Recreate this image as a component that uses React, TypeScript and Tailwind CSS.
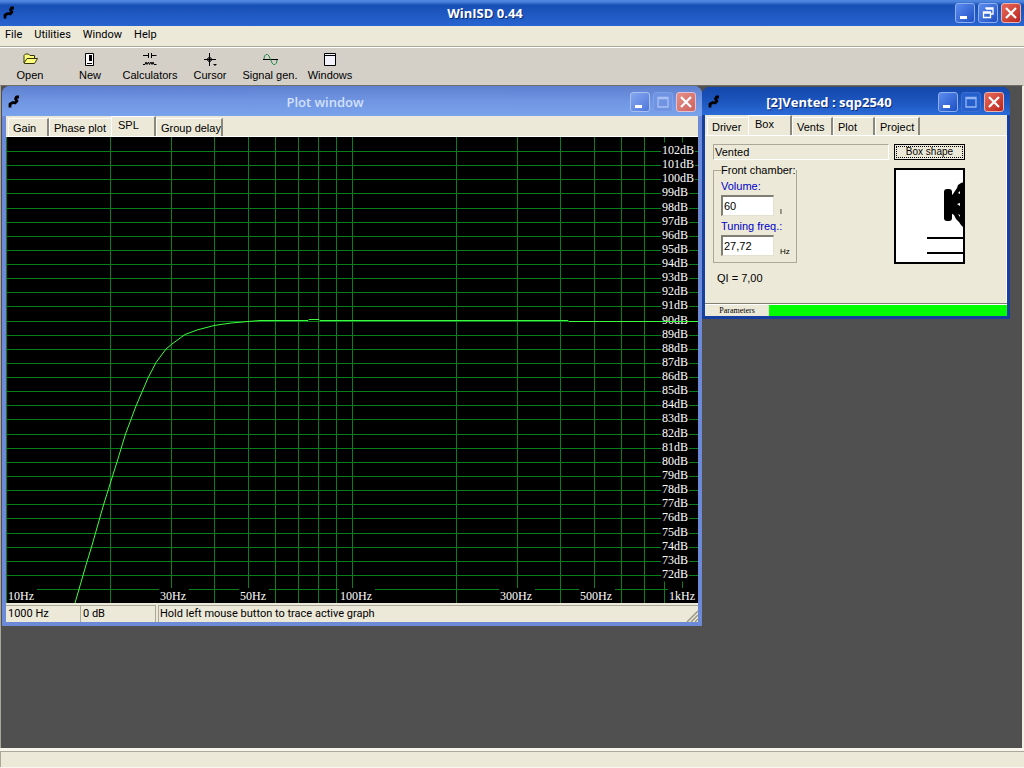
import React from 'react';

const UI_FONT = "font-['Liberation_Sans',sans-serif]";
const SYSTEM_FONT = "font-['Roboto',sans-serif]";
const TITLE_FONT = "font-['Open_Sans',sans-serif]";

const MENU_ITEMS = ['File', 'Utilities', 'Window', 'Help'];

const PLOT_WIDTH = 692;
const PLOT_HEIGHT = 466;

const GRID_FREQS = [
  10, 20, 30, 40, 50, 60, 70, 80, 90, 100, 200, 300, 400, 500, 600, 700, 800, 900, 1000,
];

const FREQ_LABELS = [
  { text: '10Hz', x: 2, width: 28 },
  { text: '30Hz', x: 154, width: 28 },
  { text: '50Hz', x: 234, width: 28 },
  { text: '100Hz', x: 334, width: 34 },
  { text: '300Hz', x: 494, width: 34 },
  { text: '500Hz', x: 574, width: 34 },
  { text: '1kHz', x: 663, width: 28 },
];

const CURVE =
  'M69 466 L80 428 L85.500 410 L97.500 368 L105 344 L111 325 L119.500 297 L130 269 L142 241 L150 225.500 L160 212 L166 207 L179 197.500 L191 193 L208 188.500 L225 186 L242 184.500 L254 183.500 L302 183.500 L303 182.500 L313 182.500 L314 183.500 L562 183.500 L563 184.500 L692 184.500';

const freqToX = (freq: number) => Math.round(Math.log10(freq / 10) * 346) + 0.5;
const dbToY = (db: number) => Math.round((102 - db) * 14.13 + 14) + 0.5;

const Logo = () => (
  <svg className="w-3 h-3.5 shrink-0" viewBox="0 0 12 14" fill="none">
    <path
      d="M2 12.500V9L5 7.500L7 8L9 6L7.500 4L8.500 2H11"
      stroke="#000"
      strokeWidth="2.800"
      strokeLinejoin="round"
    />
  </svg>
);

interface WindowButtonsProps {
  restore?: boolean;
  inactive?: boolean;
  maxDisabled?: boolean;
}

const WindowButtons: React.FC<WindowButtonsProps> = ({ restore, inactive, maxDisabled }) => {
  const blue = inactive
    ? 'border-[#a9bff0] bg-linear-to-br from-[#86a7ee] to-[#5078dc]'
    : 'border-[#8fb0ee] bg-linear-to-br from-[#5d8cf0] to-[#1d4fc4]';
  const red = inactive
    ? 'border-[#e2c2d2] bg-linear-to-br from-[#e58f88] to-[#cf625f]'
    : 'border-[#e9b4b0] bg-linear-to-br from-[#e8695a] to-[#b9201c]';
  const faded = inactive
    ? 'border-[#7fa0e8] bg-[#7094e2]'
    : 'border-[#3d70d2] bg-[#2560cc]';
  const base = 'w-5 h-5 border rounded-[3px] flex items-center justify-center';

  return (
    <div className="flex gap-[3px] shrink-0">
      <button aria-label="Minimize" className={`${base} ${blue}`}>
        <svg className="w-4 h-4" viewBox="0 0 16 16">
          <path d="M3 11H10V14H3Z" fill="#fff" />
        </svg>
      </button>
      <button aria-label="Maximize" className={`${base} ${maxDisabled ? faded : blue}`}>
        <svg className="w-4 h-4" viewBox="0 0 16 16" fill="none">
          {restore ? (
            <path d="M6 4V3H13V9H11M6 4H13M3.500 7H10.500V12.500H3.500ZM3 8H11" stroke="#fff" strokeWidth="1.300" />
          ) : (
            <path
              d="M3 3.500H13V13H3ZM2.500 4.500H13.500"
              stroke={inactive ? '#a9c1f4' : '#94b6f5'}
              strokeWidth="1.300"
            />
          )}
        </svg>
      </button>
      <button aria-label="Close" className={`${base} ${red}`}>
        <svg className="w-4 h-4" viewBox="0 0 16 16">
          <path d="M3 3L13 13M13 3L3 13" stroke="#fff" strokeWidth="2.200" />
        </svg>
      </button>
    </div>
  );
};

const TOOLS = [
  {
    label: 'Open',
    icon: (
      <path
        d="M3 12V4.500L4.500 3H7.500L9 4.500H13.500V7M3 12L6 7.500H16.500L13.500 12.500H3.500Z"
        fill="#ffff80"
        stroke="#33330a"
      />
    ),
  },
  {
    label: 'New',
    icon: (
      <>
        <path d="M4.500 2.500H12.500V14.500H4.500Z" fill="#fff" stroke="#000" />
        <path d="M8 4H11V10H8ZM6 12H11V13H6Z" fill="#000" />
      </>
    ),
  },
  {
    label: 'Calculators',
    icon: (
      <path
        d="M2 4.500H7M10 4.500H15.500M7.500 2V7M10.500 2V7M2 13.500H4L5 11L6 13.500L7.500 11L8.500 13.500L10 11L11 13.500L12 11L13 13.500H15.500"
        fill="none"
        stroke="#000"
      />
    ),
  },
  {
    label: 'Cursor',
    icon: (
      <>
        <path d="M3 8.500H15M8.500 2V15" fill="none" stroke="#000" />
        <circle cx="8.500" cy="8.500" r="2" fill="none" stroke="#000" />
        <path d="M12 13H16L14 15Z" fill="#000" />
      </>
    ),
  },
  {
    label: 'Signal gen.',
    icon: (
      <>
        <path d="M2 8.500H17" stroke="#000" />
        <path
          d="M3 8L3.500 5L5 3.500H6.500L8 5L9.500 8.500L11 12L12.500 13.500H14L15.500 12L16 9"
          fill="none"
          stroke="#1f8a4c"
        />
      </>
    ),
  },
  {
    label: 'Windows',
    icon: (
      <>
        <path d="M3.500 2.500H14.500V14.500H3.500Z" fill="#f4f2fa" stroke="#000" />
        <path d="M3 4.500H15" stroke="#000" />
      </>
    ),
  },
];

interface TabItem {
  label: string;
  width: string;
}

const PLOT_TABS: TabItem[] = [
  { label: 'Gain', width: 'w-[41px]' },
  { label: 'Phase plot', width: 'w-[62px]' },
  { label: 'SPL', width: 'w-[45px]' },
  { label: 'Group delay', width: 'w-[67px]' },
];

const PROJECT_TABS: TabItem[] = [
  { label: 'Driver', width: 'w-[41px]' },
  { label: 'Box', width: 'w-[44px]' },
  { label: 'Vents', width: 'w-[41px]' },
  { label: 'Plot', width: 'w-[42px]' },
  { label: 'Project', width: 'w-[45px]' },
];

const TabStrip: React.FC<{ tabs: TabItem[]; active: string }> = ({ tabs, active }) => {
  const activeIndex = tabs.findIndex((tab) => tab.label === active);

  return (
    <div role="tablist" className="flex items-end h-[21px] px-0.5 bg-[#ece9d8] border-b border-white">
      {tabs.map((tab, index) => {
        const selected = index === activeIndex;
        const rightEdge = index === activeIndex - 1 ? 'border-r-0' : 'border-r-2 border-r-[#8a887c]';
        return (
          <button
            key={tab.label}
            role="tab"
            aria-selected={selected}
            className={`${tab.width} ${rightEdge} flex items-start whitespace-nowrap leading-4 border-t border-l border-t-white border-l-white ${
              selected ? 'h-5 px-1.5' : 'h-[18px] pl-1 pt-px'
            }`}
          >
            {tab.label}
          </button>
        );
      })}
    </div>
  );
};

const SplPlot = () => {
  const levels = Array.from({ length: 32 }, (_, i) => 102 - i);

  return (
    <svg
      className="block w-full bg-black font-['Liberation_Serif',serif] text-[12px]"
      viewBox={`0 0 ${PLOT_WIDTH} ${PLOT_HEIGHT}`}
      role="img"
      aria-label="SPL"
    >
      <g stroke="#0a7d1c" shapeRendering="crispEdges">
        {GRID_FREQS.map((freq) => (
          <path key={freq} d={`M${freqToX(freq)} 0V${PLOT_HEIGHT}`} />
        ))}
        {levels.map((db) => (
          <path key={db} d={`M0 ${dbToY(db)}H${PLOT_WIDTH}`} />
        ))}
      </g>
      {levels.slice(0, 31).map((db) => (
        <g key={db}>
          <rect x="655" y={dbToY(db) - 9} width={db > 99 ? 34 : 28} height="15" fill="#000" />
          <text x="656" y={dbToY(db) + 2.5} fill="#fff">{`${db}dB`}</text>
        </g>
      ))}
      {FREQ_LABELS.map((label) => (
        <g key={label.text}>
          <rect x={label.x - 1} y="451" width={label.width + 2} height="15" fill="#000" />
          <text x={label.x} y="463" fill="#fff">
            {label.text}
          </text>
        </g>
      ))}
      <path d={CURVE} fill="none" stroke="#3dfc3d" />
    </svg>
  );
};

const PlotWindow = () => (
  <section className="absolute left-px top-0 w-[700px] rounded-t-lg bg-[#6c8ad8] px-1 pb-1">
    <header className="-mx-1 h-[30px] pt-0.5 px-1.5 flex items-center rounded-t-lg bg-linear-to-b from-[#5f80d0] via-[#7095e2] to-[#7aa3ec]">
      <Logo />
      <h2 className={`${TITLE_FONT} flex-1 text-center text-[13px] leading-4 font-semibold text-[#d3e0fb]`}>
        Plot window
      </h2>
      <WindowButtons inactive maxDisabled />
    </header>
    <TabStrip tabs={PLOT_TABS} active="SPL" />
    <SplPlot />
    <footer className={`${SYSTEM_FONT} flex h-[19px] pt-0.5 bg-[#ece9d8] leading-4`}>
      <span className="w-[75px] pl-0.5 border-t border-r border-[#aca899]">1000 Hz</span>
      <span className="w-[75px] pl-0.5 border-t border-r border-[#aca899]">0 dB</span>
      <span className="flex-1 flex justify-between pl-px ml-0.5 border-t border-l border-[#aca899]">
        Hold left mouse button to trace active graph
        <svg className="w-3 h-3 mt-1" viewBox="0 0 12 12">
          <path d="M1 12L12 1M5 12L12 5M9 12L12 9" stroke="#9a9788" strokeWidth="1.500" />
        </svg>
      </span>
    </footer>
  </section>
);

const SpeakerBox = () => (
  <svg className="w-[71px] h-24 ml-px" viewBox="0 0 71 96">
    <rect x="1" y="1" width="69" height="94" fill="#fff" stroke="#000" strokeWidth="2" />
    <rect x="50" y="21" width="8" height="32" rx="3" />
    <path d="M57 28L59 26L61 23L63 20L64 17L67 15L70 14V60L67 57L65 54L62 51L60 47L57 45Z" />
    <path d="M64 25L66 23V26ZM63 36L66 35V38ZM64 46L66 47V49Z" fill="#fff" />
    <path d="M33 70H70M33 85H70" stroke="#000" strokeWidth="2" />
  </svg>
);

interface ChamberFieldProps {
  id: string;
  label: string;
  value: string;
  unit: string;
}

const ChamberField: React.FC<ChamberFieldProps> = ({ id, label, value, unit }) => (
  <div className="h-10">
    <label htmlFor={id} className="block h-[19px] pt-0.5 leading-4 text-[#0000c8] whitespace-nowrap">
      {label}
    </label>
    <div className="flex items-end gap-1.5">
      <input
        id={id}
        defaultValue={value}
        className="w-[53px] h-[21px] px-px bg-white border-t-2 border-l-2 border-r border-b border-t-[#807e72] border-l-[#807e72] border-r-[#e4e1d2] border-b-[#e4e1d2]"
      />
      <span className="text-[8px] leading-[8px]">{unit}</span>
    </div>
  </div>
);

const ProjectWindow = () => (
  <section className="absolute left-[701px] top-px w-[308px] rounded-t-lg bg-[#163f9f] px-[3px] pb-[3px]">
    <header className="-mx-[3px] h-7 pt-0.5 px-1.5 flex items-center rounded-t-lg bg-linear-to-b from-[#1547ab] via-[#1c55bd] to-[#2b6bd8]">
      <Logo />
      <h2
        className={`${TITLE_FONT} flex-1 text-center text-[13px] leading-4 font-bold text-white [text-shadow:1px_1px_#0a2a78]`}
      >
        [2]Vented : sqp2540
      </h2>
      <WindowButtons maxDisabled />
    </header>
    <TabStrip tabs={PROJECT_TABS} active="Box" />
    <div className="flex gap-1 h-[167px] pt-2 pl-2 bg-[#ece9d8] border-r border-white">
      <div className="w-44">
        <div className="h-4 px-px leading-[14px] border border-[#aca899] border-r-white border-b-white">
          Vented
        </div>
        <fieldset className="w-[84px] h-[99px] mt-1 pl-[7px] border border-[#aca899]">
          <legend className="leading-3 whitespace-nowrap">Front chamber:</legend>
          <ChamberField id="volume" label="Volume:" value="60" unit="l" />
          <ChamberField id="tuning" label="Tuning freq.:" value="27,72" unit="Hz" />
        </fieldset>
        <p className="pl-1 pt-[7px] leading-4">QI = 7,00</p>
      </div>
      <div className="w-[72px]">
        <button className="block w-[71px] h-4 ml-px p-px text-[10px] bg-[#ece9d8] border border-black">
          <span className="block h-3 leading-[10px] border border-dotted border-black">Box shape</span>
        </button>
        <div className="mt-2">
          <SpeakerBox />
        </div>
      </div>
    </div>
    <footer className="flex h-[13px] border-t border-[#807e72] bg-[#00ff00]">
      <span className="w-16 bg-[#ece9d8] border-t border-white text-center font-['Liberation_Serif',serif] text-[8px] leading-[11px]">
        Parameters
      </span>
      <span className="flex-1 border-t border-white" />
    </footer>
  </section>
);

export default function App() {
  return (
    <div className={`${UI_FONT} h-screen flex flex-col bg-[#ece9d8] text-[11px] text-black overflow-hidden`}>
      <header className="h-[26px] shrink-0 pl-[3px] pr-[3px] pb-px flex items-center bg-linear-to-b from-[#4f86e0] from-5% via-[#184fb5] via-20% to-[#2864d0]">
        <Logo />
        <h1
          className={`${TITLE_FONT} flex-1 text-center text-[13px] leading-4 font-bold text-white [text-shadow:1px_1px_#0a2a78]`}
        >
          WinISD 0.44
        </h1>
        <WindowButtons restore />
      </header>

      <nav className={`${SYSTEM_FONT} h-5 shrink-0 flex items-start pt-px gap-3 px-[5px] leading-4`}>
        {MENU_ITEMS.map((item) => (
          <button key={item}>{item}</button>
        ))}
      </nav>

      <div className="h-[39px] shrink-0 flex bg-[#d4d0c8] border-t border-[#aca899]">
        {TOOLS.map((tool) => (
          <button
            key={tool.label}
            className="w-[60px] pt-[3px] flex flex-col items-center justify-start whitespace-nowrap border-t border-white"
          >
            <svg className="w-[18px] h-4 shrink-0" viewBox="0 0 18 16">
              {tool.icon}
            </svg>
            <span className="leading-4">{tool.label}</span>
          </button>
        ))}
        <div className="flex-1 border-t border-white" />
      </div>

      {/* MDI workspace */}
      <main className="flex-1 relative bg-[#505050] border-t border-l border-r-2 border-t-[#716f64] border-l-[#aca899] border-r-[#f1efe2]">
        <PlotWindow />
        <ProjectWindow />
      </main>

      <footer className="h-5 shrink-0 pt-[3px] bg-[#f8f6ec]">
        <div className="h-4 bg-[#ece9d8] border-t border-l border-[#aca899]" />
      </footer>
    </div>
  );
}
